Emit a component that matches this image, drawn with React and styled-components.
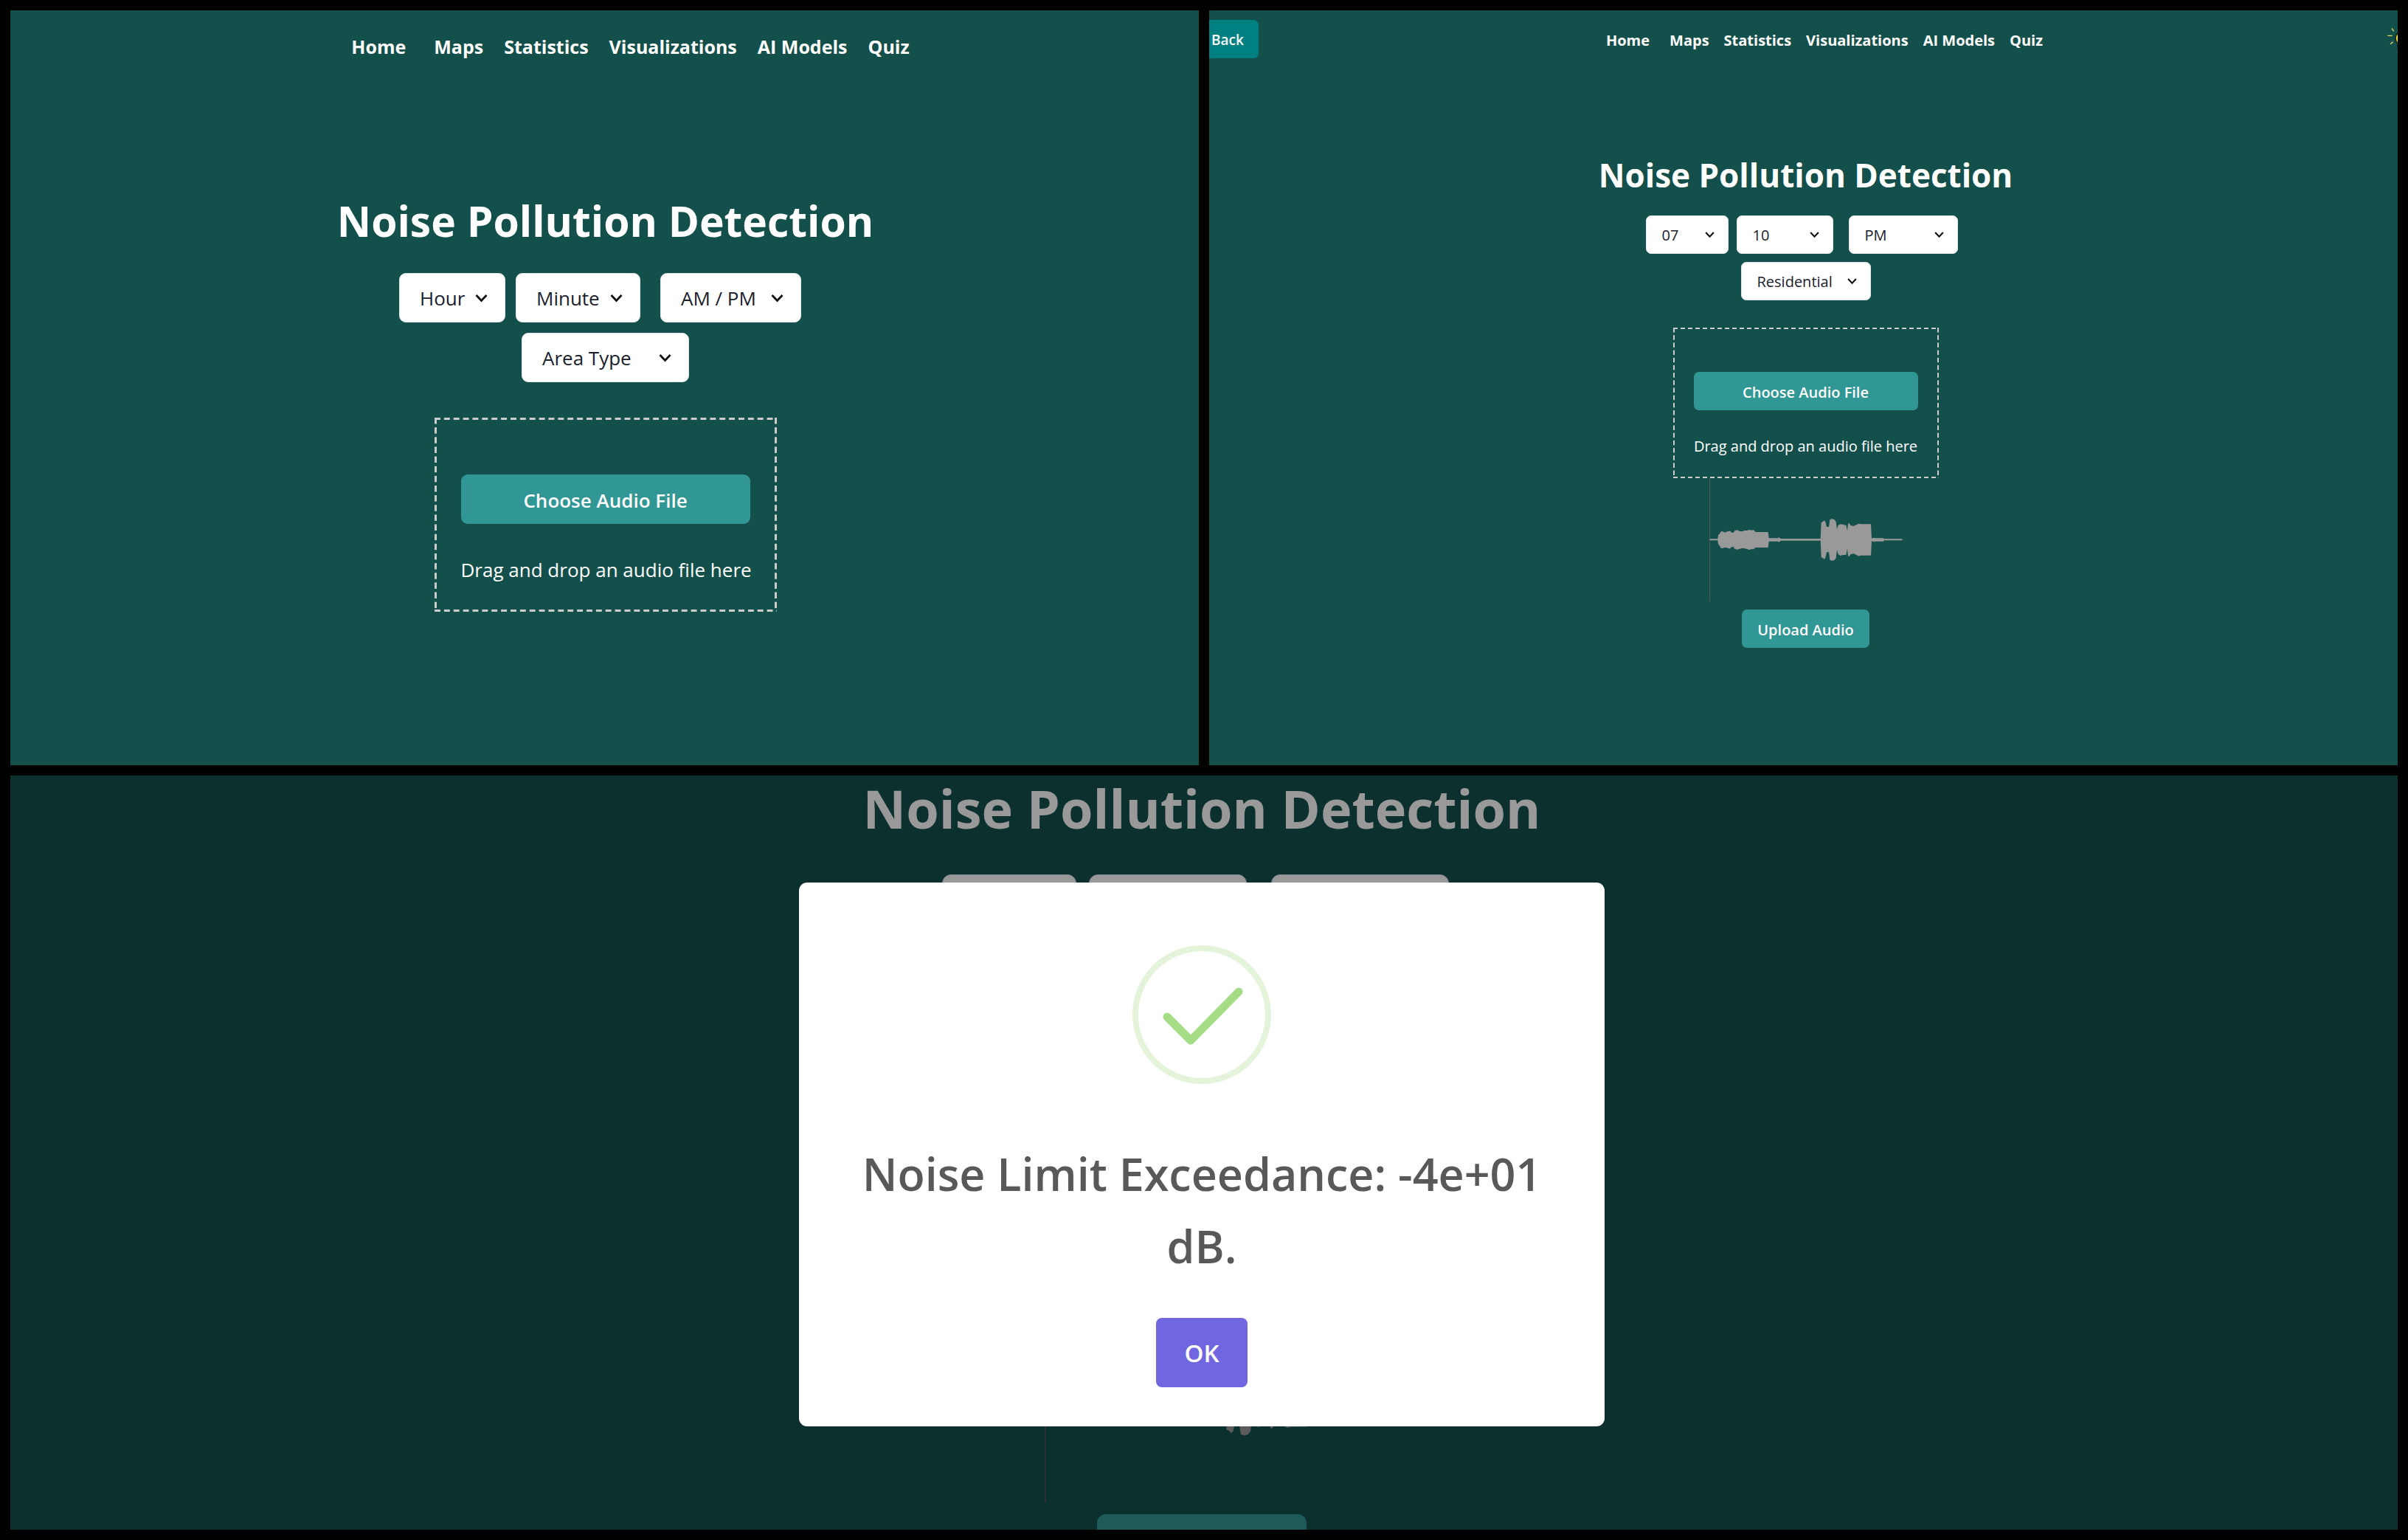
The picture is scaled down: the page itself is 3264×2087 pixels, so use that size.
import React from "react";
import styled, { createGlobalStyle, ThemeProvider } from "styled-components";

const GlobalStyle = createGlobalStyle`
  *, *::before, *::after { box-sizing: border-box; }
  body {
    margin: 0;
    background: #000;
    color: #fff;
    font-family: "Open Sans", "Noto Sans", sans-serif;
  }
  h1, h2, p { margin: 0; }
  button, select { font-family: inherit; }
`;

/* Three zoom levels of the same screen. */
const medium = {
  headerHeight: 78, navFont: 20, navGap: 20, homeGap: 7, navShift: 4,
  titleTop: 120, titleFont: 44, titleLine: 51, titleBottom: 29, inset: 12,
  control: 52, font: 20, pad: 21, radius: 7, gap: 11, chevron: 13, chevronRight: 19,
  hour: 112, minute: 131, period: 148, area: 176,
  dropTop: 37, dropWidth: 360, dash: 10, stroke: 2,
  dropPad: "60px 28px 28px", dropGap: 34, dropLine: 30,
  wave: 262, waveHeight: 167,
};
const large = {
  ...medium,
  headerHeight: 96, navFont: 25, navGap: 28, homeGap: 10, navShift: 70,
  titleTop: 156, titleFont: 57, titleLine: 67, titleBottom: 37, inset: 8,
  control: 67, font: 26, pad: 27, radius: 9, gap: 14, chevron: 17, chevronRight: 24,
  hour: 144, minute: 169, period: 191, area: 227,
  dropTop: 48, dropWidth: 464, dash: 13, stroke: 3,
  dropPad: "77px 36px 37px", dropGap: 42, dropLine: 40,
};
const huge = {
  ...medium,
  titleTop: 2, titleFont: 72, titleLine: 84, titleBottom: 48, inset: 0,
  control: 85, font: 32, pad: 38, radius: 12, gap: 17, chevron: 21, chevronRight: 31,
  hour: 182, minute: 214, period: 241, area: 287,
  dropTop: 60, dropWidth: 586, dash: 16, stroke: 3,
  dropPad: "97px 46px 46px", dropGap: 54, dropLine: 49,
  wave: 426, waveHeight: 272,
};

const Page = styled.main`
  display: grid;
  grid-template-columns: 1fr 1fr;
  grid-template-rows: minmax(0, 1fr) minmax(0, 1fr);
  gap: 14px;
  height: 100vh;
  padding: 14px;
`;

const Panel = styled.section`
  position: relative;
  display: flex;
  flex-direction: column;
  min-width: 0;
  overflow: hidden;
  background: #13504b;
  grid-column: ${(p) => (p.$wide ? "1 / -1" : "auto")};
`;

const Header = styled.header`
  display: flex;
  align-items: center;
  flex: none;
  height: ${(p) => p.theme.headerHeight}px;
  margin: ${(p) => (p.$bleed ? "0 -14px 0 -17px" : "0")};
`;

const Nav = styled.nav`
  display: flex;
  flex: 1;
  justify-content: center;
  gap: ${(p) => p.theme.navGap}px;
  padding: 2px 0 0 ${(p) => p.theme.navShift}px;
`;

const NavLink = styled.a`
  color: #fff;
  font-size: ${(p) => p.theme.navFont}px;
  font-weight: 700;
  text-decoration: none;
  white-space: nowrap;
  &:first-child { margin-right: ${(p) => p.theme.homeGap}px; }
`;

const BackButton = styled.button`
  height: 52px;
  padding: 2px 20px 0;
  border: 0;
  border-radius: 7px;
  background: #008080;
  color: #fff;
  font-size: 19px;
  font-weight: 600;
`;

const Content = styled.div`
  display: flex;
  flex-direction: column;
  align-items: center;
  flex: none;
  padding: ${(p) => p.theme.titleTop}px 6px 0 ${(p) => p.theme.inset}px;
`;

const Title = styled.h1`
  margin-bottom: ${(p) => p.theme.titleBottom}px;
  font-size: ${(p) => p.theme.titleFont}px;
  line-height: ${(p) => p.theme.titleLine}px;
  font-weight: 700;
  white-space: nowrap;
`;

const SelectRow = styled.div`
  display: flex;
  gap: ${(p) => p.theme.gap}px;
  margin-bottom: ${(p) => p.theme.gap}px;
  padding-right: ${(p) => p.theme.gap}px;
`;

const SelectBox = styled.div`
  position: relative;
  width: ${(p) => p.theme[p.$kind]}px;
  margin-left: ${(p) => (p.$kind === "period" ? p.theme.gap - 1 : 0)}px;
`;

const SelectField = styled.select`
  display: block;
  appearance: none;
  width: 100%;
  height: ${(p) => p.theme.control}px;
  padding: 0 0 0 ${(p) => p.theme.pad}px;
  border: 1px solid #e2e8f0;
  border-radius: ${(p) => p.theme.radius}px;
  background: #fff;
  color: #1a202c;
  font-size: ${(p) => p.theme.font}px;
`;

const Chevron = styled.svg`
  position: absolute;
  top: 50%;
  right: ${(p) => p.theme.chevronRight}px;
  width: ${(p) => p.theme.chevron}px;
  transform: translateY(-50%);
  pointer-events: none;
`;

const DropZone = styled.div`
  --dash-x: linear-gradient(90deg, #ccc 62%, transparent 0);
  --dash-y: linear-gradient(180deg, #ccc 62%, transparent 0);
  display: flex;
  flex-direction: column;
  width: ${(p) => p.theme.dropWidth}px;
  margin-top: ${(p) => p.theme.dropTop}px;
  padding: ${(p) => p.theme.dropPad};
  background-image: var(--dash-x), var(--dash-x), var(--dash-y), var(--dash-y);
  background-position: left top, left bottom, left top, right top;
  background-size:
    ${(p) => `${p.theme.dash}px ${p.theme.stroke}px, ${p.theme.dash}px ${p.theme.stroke}px,
    ${p.theme.stroke}px ${p.theme.dash}px, ${p.theme.stroke}px ${p.theme.dash}px`};
  background-repeat: round no-repeat, round no-repeat, no-repeat round, no-repeat round;
`;

const ActionButton = styled.button`
  height: ${(p) => p.theme.control}px;
  padding: 2px ${(p) => p.theme.pad}px 0;
  border: 0;
  border-radius: ${(p) => p.theme.radius}px;
  background: #319795;
  color: #fff;
  font-size: ${(p) => p.theme.font}px;
  font-weight: 600;
  white-space: nowrap;
`;

const DropHint = styled.p`
  margin-top: ${(p) => p.theme.dropGap}px;
  font-size: ${(p) => p.theme.font}px;
  line-height: ${(p) => p.theme.dropLine}px;
  text-align: center;
  white-space: nowrap;
`;

const Wave = styled.svg`
  display: block;
  width: ${(p) => p.theme.wave}px;
  height: ${(p) => p.theme.waveHeight}px;
  margin-bottom: ${(p) => p.theme.gap}px;
`;

const Backdrop = styled.div`
  position: absolute;
  inset: 0;
  display: flex;
  align-items: center;
  justify-content: center;
  padding: 5px 6px 0 0;
  background: rgba(0, 0, 0, 0.4);
`;

const Modal = styled.div`
  display: flex;
  flex-direction: column;
  align-items: center;
  width: 1092px;
  max-width: 100%;
  padding: 85px 80px 53px;
  border-radius: 11px;
  background: #fff;
`;

const SuccessIcon = styled.svg`
  width: 188px;
  height: 188px;
`;

const ModalTitle = styled.h2`
  margin: 73px 0 48px;
  color: #595959;
  font-size: 61px;
  line-height: 98px;
  font-weight: 600;
  text-align: center;
`;

const OkButton = styled.button`
  width: 124px;
  height: 94px;
  padding: 2px 0 0;
  border: 0;
  border-radius: 8px;
  background: #7066e0;
  color: #fff;
  font-size: 33px;
  font-weight: 600;
`;

const LINKS = ["Home", "Maps", "Statistics", "Visualizations", "AI Models", "Quiz"];

function NavBar() {
  return (
    <Nav aria-label="Main">
      {LINKS.map((label) => (
        <NavLink key={label} href="#">{label}</NavLink>
      ))}
    </Nav>
  );
}

function Dropdown({ kind, label, value }) {
  return (
    <SelectBox $kind={kind}>
      <SelectField aria-label={label} defaultValue={value}>
        <option value={value}>{value}</option>
      </SelectField>
      <Chevron viewBox="0 0 17 12" aria-hidden="true">
        <path d="M1.5 2 8.500 9.500 15.500 2" fill="none" stroke="#111" strokeWidth="2.800" />
      </Chevron>
    </SelectBox>
  );
}

function Bulb() {
  return (
    <svg width="28" height="32" viewBox="276 108 84 96" aria-hidden="true">
      <path
        d="M294 112l8 12M277 142h19M288 176l11-9"
        stroke="#e2dc62" strokeWidth="4" fill="none"
      />
      <path
        d="M319 176c-8-8-10-14-10-24 0-14 10-24 22-24s22 10 22 24c0 10-2 16-10 24v18h-24z"
        fill="#f7e637" stroke="#1c2b20" strokeWidth="6"
      />
    </svg>
  );
}

function Waveform() {
  return (
    <Wave viewBox="232 54 786 501" preserveAspectRatio="none" role="img" aria-label="Audio waveform">
      <path d="M233.500 54V555" stroke="#555" strokeWidth="3" />
      <path
        fill="#999"
        d="M234 301H266L268 285 273 281 279 271 289 271 293 275 302 272 311 269 318 269 322 275 331 275 335 267 346 265 354 269 367 271 374 267 386 267 394 263 401 266 412 265 420 273H471L474 298H510L516 295 522 300H684L687 234 694 231 698 226 704 231 709 252H718L722 223 731 219 741 223 747 231 751 262 756 245 765 241 776 243 788 246 793 268 796 240 800 236 807 247 820 248 831 243 840 239 848 241H889L892 299 901 296 906 298H941V301H1016V307H941V311H906L901 313 892 310 889 368H848L840 371 831 367 820 361 807 363 800 373 796 370 793 341 788 366 776 366 765 369 756 364 751 346 747 379 741 387 731 390 722 386 718 355H709L704 378 698 384 694 378 687 376 684 308H522L516 314 510 311H474L471 336H420L412 343 401 343 394 346 386 342 374 340 367 338 354 342 346 344 335 342 331 334 322 334 318 340 311 340 302 337 293 335 289 339 279 338 273 328 268 322 266 307H234Z"
      />
    </Wave>
  );
}

function Detector({ hour, minute, period, area, children }) {
  return (
    <Content>
      <Title>Noise Pollution Detection</Title>
      <SelectRow>
        <Dropdown kind="hour" label="Hour" value={hour} />
        <Dropdown kind="minute" label="Minute" value={minute} />
        <Dropdown kind="period" label="AM or PM" value={period} />
      </SelectRow>
      <Dropdown kind="area" label="Area type" value={area} />
      <DropZone>
        <ActionButton type="button">Choose Audio File</ActionButton>
        <DropHint>Drag and drop an audio file here</DropHint>
      </DropZone>
      {children}
    </Content>
  );
}

const RECORDED = { hour: "07", minute: "10", period: "PM", area: "Residential" };

export default function App() {
  return (
    <Page>
      <GlobalStyle />

      <ThemeProvider theme={large}>
        <Panel>
          <Header><NavBar /></Header>
          <Detector hour="Hour" minute="Minute" period="AM / PM" area="Area Type" />
        </Panel>
      </ThemeProvider>

      <ThemeProvider theme={medium}>
        <Panel>
          <Header $bleed>
            <BackButton type="button">Back</BackButton>
            <NavBar />
            <Bulb />
          </Header>
          <Detector {...RECORDED}>
            <Waveform />
            <ActionButton type="button">Upload Audio</ActionButton>
          </Detector>
        </Panel>
      </ThemeProvider>

      <ThemeProvider theme={huge}>
        <Panel $wide>
          <Detector {...RECORDED}>
            <Waveform />
            <ActionButton type="button">Upload Audio</ActionButton>
          </Detector>
          <Backdrop>
            <Modal role="dialog" aria-modal="true" aria-labelledby="result-title">
              <SuccessIcon viewBox="0 0 188 188" aria-hidden="true">
                <circle cx="94" cy="94" r="90" fill="none" stroke="#e4f4db" strokeWidth="8" />
                <path
                  d="M47 97 79 129 144 63" fill="none" stroke="#a5dc86"
                  strokeWidth="11" strokeLinecap="round" strokeLinejoin="round"
                />
              </SuccessIcon>
              <ModalTitle id="result-title">Noise Limit Exceedance: -4e+01 dB.</ModalTitle>
              <OkButton type="button">OK</OkButton>
            </Modal>
          </Backdrop>
        </Panel>
      </ThemeProvider>
    </Page>
  );
}
